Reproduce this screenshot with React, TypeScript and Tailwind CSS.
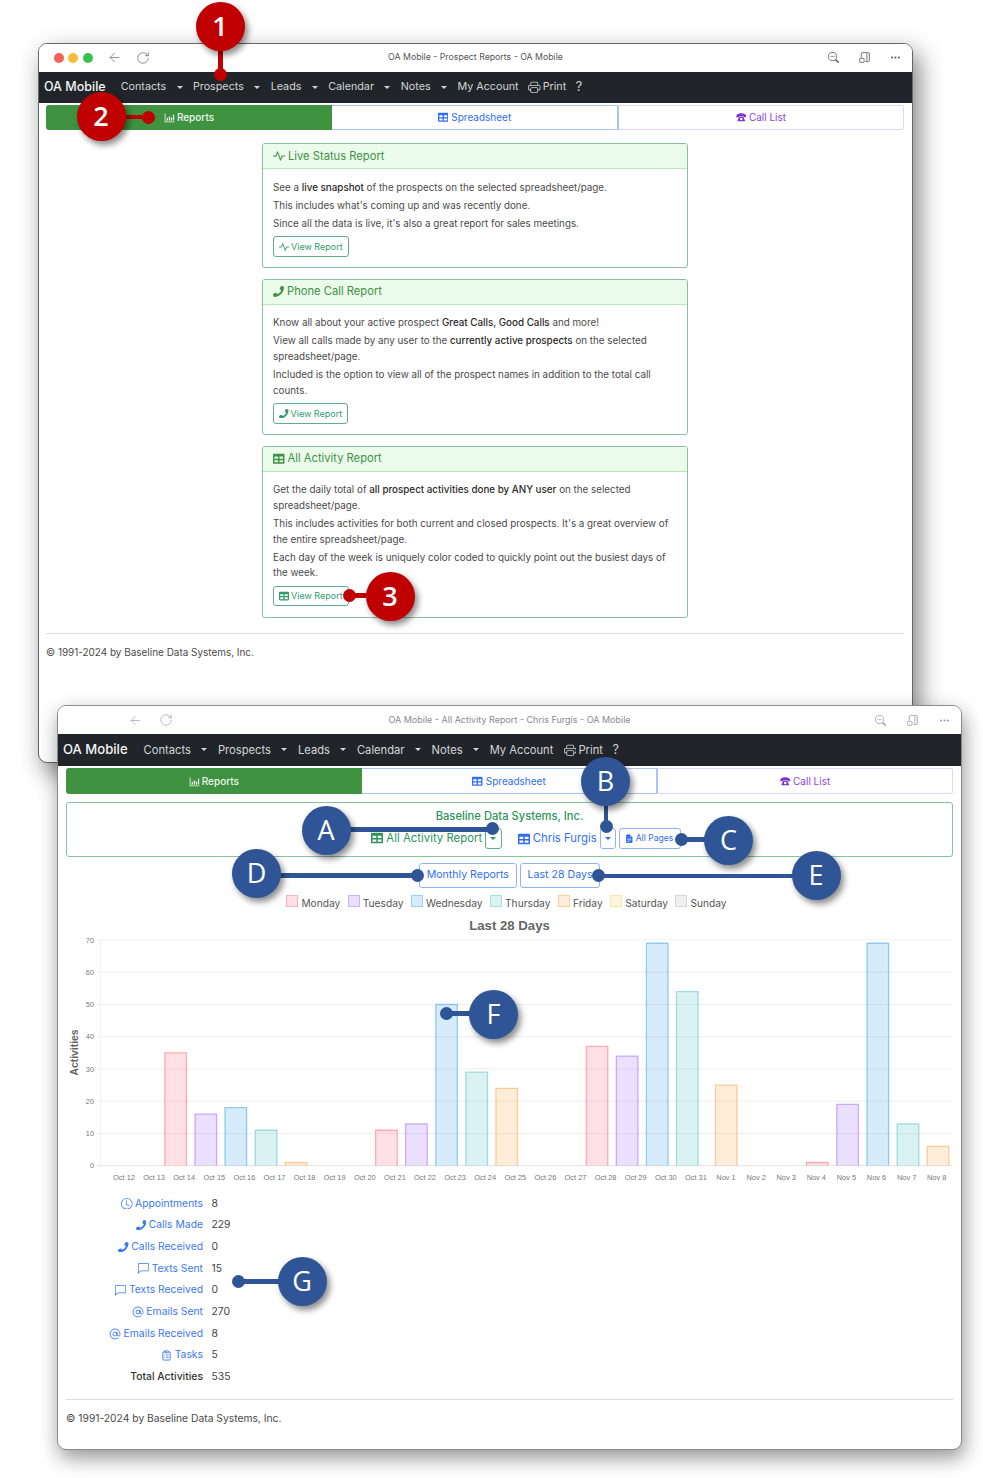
import React from "react";
import { FaPhone, FaTable } from "react-icons/fa";
import { BsActivity, BsPrinter, BsZoomOut, BsThreeDots, BsClock, BsChatLeft, BsFileEarmarkTextFill } from "react-icons/bs";
import { ArrowLeft, RotateCw, ClipboardList, AtSign } from "lucide-react";

const F = "font-['Inter','Liberation_Sans',sans-serif]";

function DeskPhone({ className }: { className?: string }) {
  return (
    <svg viewBox="0 0 16 16" className={className} fill="currentColor">
      <path d="M0.5 6.2C0.5 3.8 4 2 8 2s7.5 1.8 7.5 4.2V8h-4V6.2H4.5V8h-4z" />
      <path fillRule="evenodd" d="M5 7h6l3 7H2zM8 8.6a2 2 0 1 0 0 4 2 2 0 0 0 0-4z" />
    </svg>
  );
}

function BarIcon({ className }: { className?: string }) {
  return (
    <svg viewBox="0 0 16 16" className={className} fill="currentColor">
      <path d="M1 2h1.2v11.8H15V15H1z" />
      <rect x="4" y="8.5" width="1.8" height="4" />
      <rect x="7" y="6.5" width="1.8" height="6" />
      <rect x="10" y="8" width="1.8" height="4.5" />
      <rect x="13" y="4" width="1.8" height="8.5" />
    </svg>
  );
}

function Reader({ className }: { className?: string }) {
  return (
    <svg viewBox="0 0 16 16" className={className} fill="none" stroke="currentColor" strokeWidth="1">
      <path d="M4 8V3.5a1.5 1.5 0 0 1 1.5-1.5h7A1.5 1.5 0 0 1 14 3.5v8a1.5 1.5 0 0 1-1.5 1.5H9" />
      <path d="M11 3v9" />
      <rect x="2" y="9" width="5.5" height="5" rx="1" />
    </svg>
  );
}

function Caret({ className }: { className?: string }) {
  return <span className={`inline-block w-0 h-0 border-x-[3px] border-x-transparent border-t-[3px] border-t-current ${className ?? ""}`} />;
}

function Titlebar({ faded, title, heightClass, titleClass, backClass, reloadClass, rightClass }: { faded?: boolean; title: string; heightClass: string; titleClass: string; backClass: string; reloadClass: string; rightClass: string }) {
  const tone = faded ? "text-[#9a9a9a]" : "text-[#555]";
  return (
    <div className={`grid grid-cols-[1fr_auto_1fr] items-center bg-white ${heightClass} ${tone}`}>
      <div className="flex items-center">
        {!faded && (
          <div className="flex items-center gap-[4.5px] pl-[14.5px]">
            <span className="w-[10px] h-[10px] rounded-full bg-[#f2605a]" />
            <span className="w-[10px] h-[10px] rounded-full bg-[#f8bb3c]" />
            <span className="w-[10px] h-[10px] rounded-full bg-[#35c24c]" />
          </div>
        )}
        <ArrowLeft className={`w-[15px] h-[15px] ${backClass}`} strokeWidth={1} />
        <RotateCw className={`w-[14px] h-[14px] ${reloadClass}`} strokeWidth={1.1} />
      </div>
      <span className={titleClass}>{title}</span>
      <div className={`flex items-center justify-end ${rightClass}`}>
        <BsZoomOut className="w-[11px] h-[11px]" />
        <Reader className="w-[13px] h-[13px]" />
        <BsThreeDots className="w-[11px] h-[11px]" />
      </div>
    </div>
  );
}

function Nav({ heightClass, itemClass, brandClass, caretClass, printClass }: { heightClass: string; itemClass: string; brandClass: string; caretClass: string; printClass: string }) {
  const items = ["Contacts", "Prospects", "Leads", "Calendar", "Notes"];
  return (
    <div className={`flex items-center bg-[#212529] text-[#d4d5d6] ${heightClass} ${itemClass}`}>
      <span className={`font-medium text-[#f4f4f4] ${brandClass}`}>OA Mobile</span>
      {items.map((t) => (
        <span key={t} className="flex items-center">
          {t}
          <Caret className={caretClass} />
        </span>
      ))}
      <span>My Account</span>
      <span className={`flex items-center ${printClass}`}>
        <BsPrinter className="w-[12.5px] h-[12.5px] mr-[2px]" />
        Print
      </span>
      <span className="ml-[9.5px] text-[12.5px]">?</span>
    </div>
  );
}

function Tabs({ className }: { className?: string }) {
  return (
    <div className={`grid grid-cols-3 text-[10px] ${className ?? ""}`}>
      <div className="flex items-center justify-center gap-[2px] rounded-l-[3px] bg-[#3f923f] text-[#f2f8f2] font-medium">
        <BarIcon className="w-[11px] h-[11px]" />
        Reports
      </div>
      <div className="flex items-center justify-center gap-[3px] border border-[#a9c4f7] border-l-0 text-[#2f6fed]">
        <FaTable className="w-[10.5px] h-[10.5px]" />
        Spreadsheet
      </div>
      <div className="flex items-center justify-center gap-[2.5px] border border-[#e3d3fb] border-l-[#a9c4f7] rounded-r-[3px] text-[#8d45e0]">
        <DeskPhone className="w-[10.5px] h-[10.5px] text-[#7b2fd6]" />
        Call List
      </div>
    </div>
  );
}

function Card({ icon, title, lines, btnIcon }: { icon: React.ReactNode; title: string; lines: React.ReactNode[]; btnIcon: React.ReactNode }) {
  return (
    <div className="w-[426px] mx-auto rounded-[3px] border border-[#89c0a0] overflow-hidden">
      <div className="flex items-center gap-[3px] h-[25px] px-[10px] bg-[#ebfceb] border-b border-[#b7e6b9] text-[#3f9144] text-[11.2px]">
        {icon}
        {title}
      </div>
      <div className="px-[10px] pt-[10.5px] pb-[10.5px] text-[9.82px] leading-[15.6px] text-[#4a4a4a]">
        {lines.map((l, i) => (
          <p key={i} className="mb-[2.5px]">{l}</p>
        ))}
        <div className="mt-[2.5px] inline-flex items-center gap-[2px] h-[20.5px] px-[5px] rounded-[3px] border border-[#62ab8c] text-[#2f9c6b] text-[9px]">
          {btnIcon}
          View Report
        </div>
      </div>
    </div>
  );
}

const B = ({ children }: { children: React.ReactNode }) => <span className="font-medium text-[#2a2a2a]">{children}</span>;

const bars: [number, number, number][] = [
  [164.8, 35, 0], [195, 16, 1], [225, 18, 2], [255.3, 11, 3], [285.3, 1, 4],
  [375.6, 11, 0], [405.6, 13, 1], [435.8, 50, 2], [465.9, 29, 3], [495.9, 24, 4],
  [586.2, 37, 0], [616.3, 34, 1], [646.4, 69, 2], [676.5, 54, 3], [715.4, 25, 4],
  [806.5, 1, 0], [836.8, 19, 1], [867, 69, 2], [897.2, 13, 3], [927.3, 6, 4],
];
const rgb = ["255,99,132", "153,102,255", "54,162,235", "75,192,192", "255,159,64"];
const days = ["Oct 12","Oct 13","Oct 14","Oct 15","Oct 16","Oct 17","Oct 18","Oct 19","Oct 20","Oct 21","Oct 22","Oct 23","Oct 24","Oct 25","Oct 26","Oct 27","Oct 28","Oct 29","Oct 30","Oct 31","Nov 1","Nov 2","Nov 3","Nov 4","Nov 5","Nov 6","Nov 7","Nov 8"];
const Y0 = 1165.7;
const U = 3.224;

function Chart() {
  return (
    <svg viewBox="58 935 903 255" className="block w-[903px] h-[255px]" fontFamily="'Liberation Sans', sans-serif">
      {[0, 10, 20, 30, 40, 50, 60, 70].map((v) => (
        <g key={v}>
          <line x1={97} x2={952} y1={Y0 - v * U} y2={Y0 - v * U} stroke={v === 0 ? "#e2e2e2" : "#efefef"} strokeWidth="1" />
          <text x={94} y={Y0 - v * U + 2.7} textAnchor="end" fontSize="7.4" fill="#777">{v}</text>
        </g>
      ))}
      <line x1={100.5} x2={100.5} y1={940} y2={1168} stroke="#efefef" />
      <text transform="translate(77.5 1052.5) rotate(-90)" textAnchor="middle" fontSize="10.4" fontWeight="bold" fill="#666">Activities</text>
      {bars.map(([x, v, c]) => {
        const h = v * U;
        const y = Y0 - h;
        return (
          <g key={x}>
            <rect x={x} y={y} width={21.6} height={h} fill={`rgba(${rgb[c]},0.2)`} />
            <path d={`M${x} ${Y0}V${y}H${x + 21.6}V${Y0}`} fill="none" stroke={`rgba(${rgb[c]},0.5)`} strokeWidth="1.3" />
          </g>
        );
      })}
      {days.map((d, i) => (
        <text key={d} x={124 + i * 30.1} y={1179.5} textAnchor="middle" fontSize="7.4" fill="#777">{d}</text>
      ))}
    </svg>
  );
}

const legend = [
  ["Monday", "bg-[#ffe0e6] border-[#ffb1c1]"],
  ["Tuesday", "bg-[#ebe0ff] border-[#ccb3ff]"],
  ["Wednesday", "bg-[#d7ecfb] border-[#9bd0f5]"],
  ["Thursday", "bg-[#dbf2f2] border-[#a5dfdf]"],
  ["Friday", "bg-[#ffecd9] border-[#ffcf9f]"],
  ["Saturday", "bg-[#fff5dd] border-[#ffe6aa]"],
  ["Sunday", "bg-[#f0f0f1] border-[#d4d5d7]"],
];

const stats: [React.ReactNode, string, string][] = [
  [<BsClock className="w-[11.5px] h-[11.5px]" />, "Appointments", "8"],
  [<FaPhone className="w-[10.5px] h-[10.5px]" />, "Calls Made", "229"],
  [<FaPhone className="w-[10.5px] h-[10.5px]" />, "Calls Received", "0"],
  [<BsChatLeft className="w-[11px] h-[11px]" />, "Texts Sent", "15"],
  [<BsChatLeft className="w-[11px] h-[11px]" />, "Texts Received", "0"],
  [<AtSign className="w-[12px] h-[12px]" strokeWidth={1.8} />, "Emails Sent", "270"],
  [<AtSign className="w-[12px] h-[12px]" strokeWidth={1.8} />, "Emails Received", "8"],
  [<ClipboardList className="w-[11px] h-[11px]" strokeWidth={2} />, "Tasks", "5"],
];

function Window1() {
  return (
    <div className="absolute left-[38px] top-[43px] w-[875px] h-[720px] rounded-[9px] border border-[#666] bg-white overflow-hidden shadow-[6px_10px_24px_rgba(0,0,0,0.5)]">
      <Titlebar title="OA Mobile - Prospect Reports - OA Mobile" heightClass="h-[27.5px]" titleClass="text-[8.75px] text-[#555]" backClass="ml-[14px]" reloadClass="ml-[14px]" rightClass="gap-[19px] pr-[11px]" />
      <Nav heightClass="h-[31px] pl-[5px]" itemClass="text-[10.75px]" brandClass="text-[12.5px] mr-[15px]" caretClass="mx-[10.4px]" printClass="ml-[9.5px]" />
      <div className="pl-[7px] pr-[8px] pt-[2.5px]">
        <Tabs className="h-[24.5px]" />
        <div className="flex flex-col gap-[10.5px] mt-[13.5px]">
          <Card
            icon={<BsActivity className="w-[12px] h-[12px] stroke-[0.4px]" />}
            title="Live Status Report"
            btnIcon={<BsActivity className="w-[10px] h-[10px] stroke-[0.4px]" />}
            lines={[
              <>See a <B>live snapshot</B> of the prospects on the selected spreadsheet/page.</>,
              "This includes what's coming up and was recently done.",
              "Since all the data is live, it's also a great report for sales meetings.",
            ]}
          />
          <Card
            icon={<FaPhone className="w-[11px] h-[11px]" />}
            title="Phone Call Report"
            btnIcon={<FaPhone className="w-[9.5px] h-[9.5px]" />}
            lines={[
              <>Know all about your active prospect <B>Great Calls, Good Calls</B> and more!</>,
              <>View all calls made by any user to the <B>currently active prospects</B> on the selected spreadsheet/page.</>,
              "Included is the option to view all of the prospect names in addition to the total call counts.",
            ]}
          />
          <Card
            icon={<FaTable className="w-[11.5px] h-[11.5px]" />}
            title="All Activity Report"
            btnIcon={<FaTable className="w-[10px] h-[10px]" />}
            lines={[
              <>Get the daily total of <B>all prospect activities done by ANY user</B> on the selected spreadsheet/page.</>,
              "This includes activities for both current and closed prospects. It's a great overview of the entire spreadsheet/page.",
              "Each day of the week is uniquely color coded to quickly point out the busiest days of the week.",
            ]}
          />
        </div>
        <div className="mt-[15.5px] border-t border-[#dcdcdc] pt-[11px] text-[9.95px] text-[#4a4a4a]">
          © 1991-2024 by Baseline Data Systems, Inc.
        </div>
      </div>
    </div>
  );
}

function Window2() {
  return (
    <div className="absolute left-[57px] top-[705px] w-[905px] h-[745px] rounded-[9px] border border-[#8a8a8a] bg-white overflow-hidden shadow-[2px_8px_20px_rgba(0,0,0,0.42)]">
      <Titlebar faded title="OA Mobile - All Activity Report - Chris Furgis - OA Mobile" heightClass="h-[28px]" titleClass="text-[9px] text-[#8a8a8a]" backClass="ml-[70px]" reloadClass="ml-[16px]" rightClass="gap-[20px] pr-[11px]" />
      <Nav heightClass="h-[32px] pl-[5px]" itemClass="text-[11.2px]" brandClass="text-[13.1px] mr-[16px]" caretClass="mx-[10.5px]" printClass="ml-[10.5px]" />
      <div className="px-[8px] pt-[2px]">
        <Tabs className="h-[26px]" />
        <div className="mt-[7.5px] h-[55px] rounded-[3px] border border-[#89c0a0] flex flex-col items-center pt-[6px]">
          <div className="text-[11.2px] leading-[15px] font-medium text-[#2d9459]">Baseline Data Systems, Inc.</div>
          <div className="flex items-center h-[24px] mt-[3px] ml-[33px]">
            <span className="flex items-center gap-[3.5px] text-[#2d9459] text-[11.4px]">
              <FaTable className="w-[12px] h-[12px]" />
              All Activity Report
            </span>
            <span className="ml-[2.5px] w-[17px] h-[21px] flex items-center justify-center rounded-[3px] border border-[#62ab8c] text-[#2d9459]">
              <Caret />
            </span>
            <span className="ml-[16px] flex items-center gap-[3px] text-[#2f6fed] text-[11.3px]">
              <FaTable className="w-[12px] h-[12px]" />
              Chris Furgis
            </span>
            <span className="ml-[3.5px] w-[16px] h-[21px] flex items-center justify-center rounded-[3px] border border-[#8fb3f5] text-[#2f6fed]">
              <Caret />
            </span>
            <span className="ml-[3px] h-[21px] w-[62px] flex items-center gap-[2px] pl-[5px] rounded-[3px] border border-[#8fb3f5] text-[#2f6fed] text-[8.6px]">
              <BsFileEarmarkTextFill className="w-[8.5px] h-[9.5px]" />
              All Pages
            </span>
          </div>
        </div>
        <div className="mt-[6px] flex justify-center gap-[3.5px] text-[10.6px] text-[#2f6fed]">
          <span className="w-[97.5px] h-[25.5px] flex items-center justify-center rounded-[3px] border border-[#8fb3f5]">Monthly Reports</span>
          <span className="w-[80px] h-[25.5px] flex items-center justify-center rounded-[3px] border border-[#8fb3f5]">Last 28 Days</span>
        </div>
        <div className="mt-[7px] flex justify-center gap-[7.5px] h-[16px] pr-[6px] text-[10.2px] text-[#555]">
          {legend.map(([t, c]) => (
            <span key={t} className="flex items-start">
              <span className={`w-[12px] h-[12px] border mr-[3px] ${c}`} />
              <span className="mt-[1px]">{t}</span>
            </span>
          ))}
        </div>
        <div className="mt-[6.5px] text-center text-[13.2px] leading-[16px] font-bold text-[#666] font-['Liberation_Sans',sans-serif]">Last 28 Days</div>
      </div>
      <div className="mt-[1px]">
        <Chart />
      </div>
      <div className="mt-[3px] ml-[8px] grid grid-cols-[137px_auto] justify-start gap-x-[8.5px] text-[10.35px] leading-[21.7px]">
        {stats.map(([icon, label, value]) => (
          <React.Fragment key={label}>
            <span className="flex items-center justify-end gap-[2.5px] text-[#3b78f0]">
              {icon}
              {label}
            </span>
            <span className="text-[#444]">{value}</span>
          </React.Fragment>
        ))}
        <span className="text-right font-medium text-[#333]">Total Activities</span>
        <span className="text-[#444]">535</span>
      </div>
      <div className="mx-[8px] mt-[11px] border-t border-[#dcdcdc] pt-[11px] text-[10.3px] text-[#4a4a4a]">
        © 1991-2024 by Baseline Data Systems, Inc.
      </div>
    </div>
  );
}

const RED = "bg-[#c00000]";
const BLUE = "bg-[#2f5597]";
const callouts = [
  { t: "1", c: RED, w: "font-semibold", circle: "left-[195.5px] top-[1.5px]", line: "left-[218px] top-[48px] w-[4.5px] h-[26px]", dot: "left-[213.5px] top-[67.5px]" },
  { t: "2", c: RED, w: "font-semibold", circle: "left-[76.5px] top-[91.5px]", line: "left-[120px] top-[114.5px] w-[28px] h-[4.5px]", dot: "left-[141.5px] top-[110.5px]" },
  { t: "3", c: RED, w: "font-semibold", circle: "left-[365.5px] top-[571.5px]", line: "left-[349px] top-[593px] w-[22px] h-[4.5px]", dot: "left-[342.5px] top-[588.5px]" },
  { t: "A", c: BLUE, w: "font-medium", circle: "left-[301.5px] top-[805.5px]", line: "left-[346px] top-[827px] w-[146px] h-[4.5px]", dot: "left-[485.5px] top-[822px]" },
  { t: "B", c: BLUE, w: "font-medium", circle: "left-[581px] top-[756.5px]", line: "left-[603.5px] top-[800px] w-[4.5px] h-[27px]", dot: "left-[599.5px] top-[820px]" },
  { t: "C", c: BLUE, w: "font-medium", circle: "left-[704px] top-[815.5px]", line: "left-[681px] top-[837px] w-[28px] h-[4.5px]", dot: "left-[674.5px] top-[833px]" },
  { t: "D", c: BLUE, w: "font-medium", circle: "left-[232px] top-[849px]", line: "left-[276px] top-[873px] w-[141px] h-[4.5px]", dot: "left-[411px] top-[868.5px]" },
  { t: "E", c: BLUE, w: "font-medium", circle: "left-[791.5px] top-[851px]", line: "left-[598px] top-[873.5px] w-[198px] h-[4.5px]", dot: "left-[592px] top-[869px]" },
  { t: "F", c: BLUE, w: "font-medium", circle: "left-[469px] top-[989.5px]", line: "left-[446px] top-[1011px] w-[28px] h-[4.5px]", dot: "left-[439.5px] top-[1006.5px]" },
  { t: "G", c: BLUE, w: "font-medium", circle: "left-[277.5px] top-[1257px]", line: "left-[238px] top-[1279px] w-[44px] h-[4.5px]", dot: "left-[232px] top-[1274.5px]" },
];

export default function App() {
  return (
    <div className={`relative w-[983px] h-[1478px] bg-white overflow-hidden ${F}`}>
      <Window1 />
      <Window2 />
      {callouts.map((k) => (
        <React.Fragment key={k.t}>
          <div className={`absolute ${k.c} ${k.line}`} />
          <div className={`absolute w-[13px] h-[13px] rounded-full ${k.c} ${k.dot}`} />
          <div className={`absolute w-[49px] h-[49px] rounded-full flex items-center justify-center text-white text-[27px] font-['Open_Sans',sans-serif] shadow-[3px_4px_6px_rgba(0,0,0,0.45)] ${k.w} ${k.c} ${k.circle}`}>
            {k.t}
          </div>
        </React.Fragment>
      ))}
    </div>
  );
}
